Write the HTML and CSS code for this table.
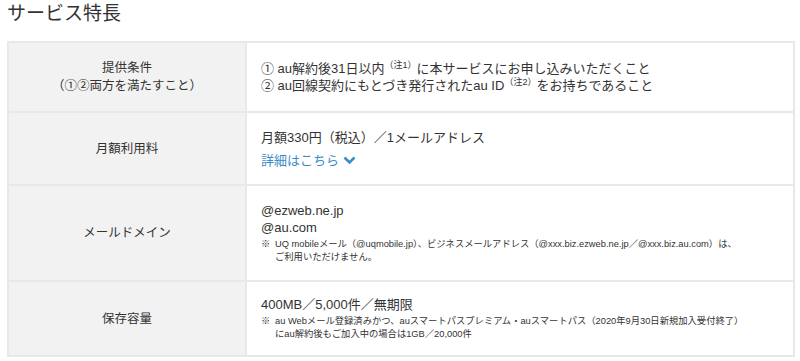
FILE: index.html
```html
<!DOCTYPE html>
<html lang="ja">
<head>
<meta charset="utf-8">
<link rel="stylesheet" href="styles.css">
</head>
<body>
<div class="page">
  <h2 class="title">サービス特長</h2>
  <table class="spec">
    <tr class="r1">
      <th>提供条件<br>（①②両方を満たすこと）</th>
      <td>
        <div>① au解約後31日以内<sup>（注1）</sup>に本サービスにお申し込みいただくこと</div>
        <div>② au回線契約にもとづき発行されたau ID<sup>（注2）</sup>をお持ちであること</div>
      </td>
    </tr>
    <tr class="r2">
      <th>月額利用料</th>
      <td>
        <div>月額330円（税込）／1メールアドレス</div>
        <a class="more" href="#">詳細はこちら<svg class="chev" width="13" height="9" viewBox="0 0 13 9"><path d="M1.5 1.5 L6.5 6.5 L11.5 1.5" fill="none" stroke="#3a8ec6" stroke-width="2.6"/></svg></a>
      </td>
    </tr>
    <tr class="r3">
      <th>メールドメイン</th>
      <td>
        <div class="line">@ezweb.ne.jp</div>
        <div class="line">@au.com</div>
        <p class="note"><span class="mark">※</span><span>UQ mobileメール（@uqmobile.jp）、ビジネスメールアドレス（@xxx.biz.ezweb.ne.jp／@xxx.biz.au.com）は、<br>ご利用いただけません。</span></p>
      </td>
    </tr>
    <tr class="r4">
      <th>保存容量</th>
      <td>
        <div class="line">400MB／5,000件／無期限</div>
        <p class="note"><span class="mark">※</span><span>au Webメール登録済みかつ、auスマートパスプレミアム・auスマートパス（2020年9月30日新規加入受付終了）<br>にau解約後もご加入中の場合は1GB／20,000件</span></p>
      </td>
    </tr>
  </table>
</div>
</body>
</html>
```
FILE: styles.css
```css
html, body {
  margin: 0;
  padding: 0;
  background: #fff;
}
body {
  font-family: "Liberation Sans", "Noto Sans CJK JP", sans-serif;
  color: #333;
}
.page {
  padding: 0 5px 0 7px;
}
.title {
  margin: 0;
  padding-top: 1px;
  height: 40px;
  font-size: 19px;
  font-weight: normal;
  line-height: 26px;
  color: #333;
}
.spec {
  width: 788px;
  border-collapse: collapse;
  table-layout: fixed;
}
.spec th, .spec td {
  border: 2px solid #e8e8e8;
  vertical-align: middle;
}
.spec th {
  width: 234px;
  background: #f2f2f2;
  font-weight: normal;
  font-size: 12.5px;
  line-height: 18px;
  text-align: center;
  color: #333;
}
.spec td {
  padding: 0 14px;
  font-size: 13px;
  line-height: 17px;
  color: #333;
}
.r1 { height: 70px; }
.r2 { height: 73px; }
.r3 { height: 96px; }
.r4 { height: 75px; }
.r2 td { line-height: 23px; }
sup {
  font-size: 9px;
  line-height: 0;
  vertical-align: 5px;
}
.more {
  color: #3a8ec6;
  text-decoration: none;
  display: inline-flex;
  align-items: center;
  gap: 4px;
}
.line { line-height: 17px; }
.note {
  margin: 2px 0 0;
  display: flex;
  font-size: 9.3px;
  line-height: 13px;
  color: #333;
  white-space: nowrap;
}
.mark {
  width: 14px;
  flex: none;
}
```
